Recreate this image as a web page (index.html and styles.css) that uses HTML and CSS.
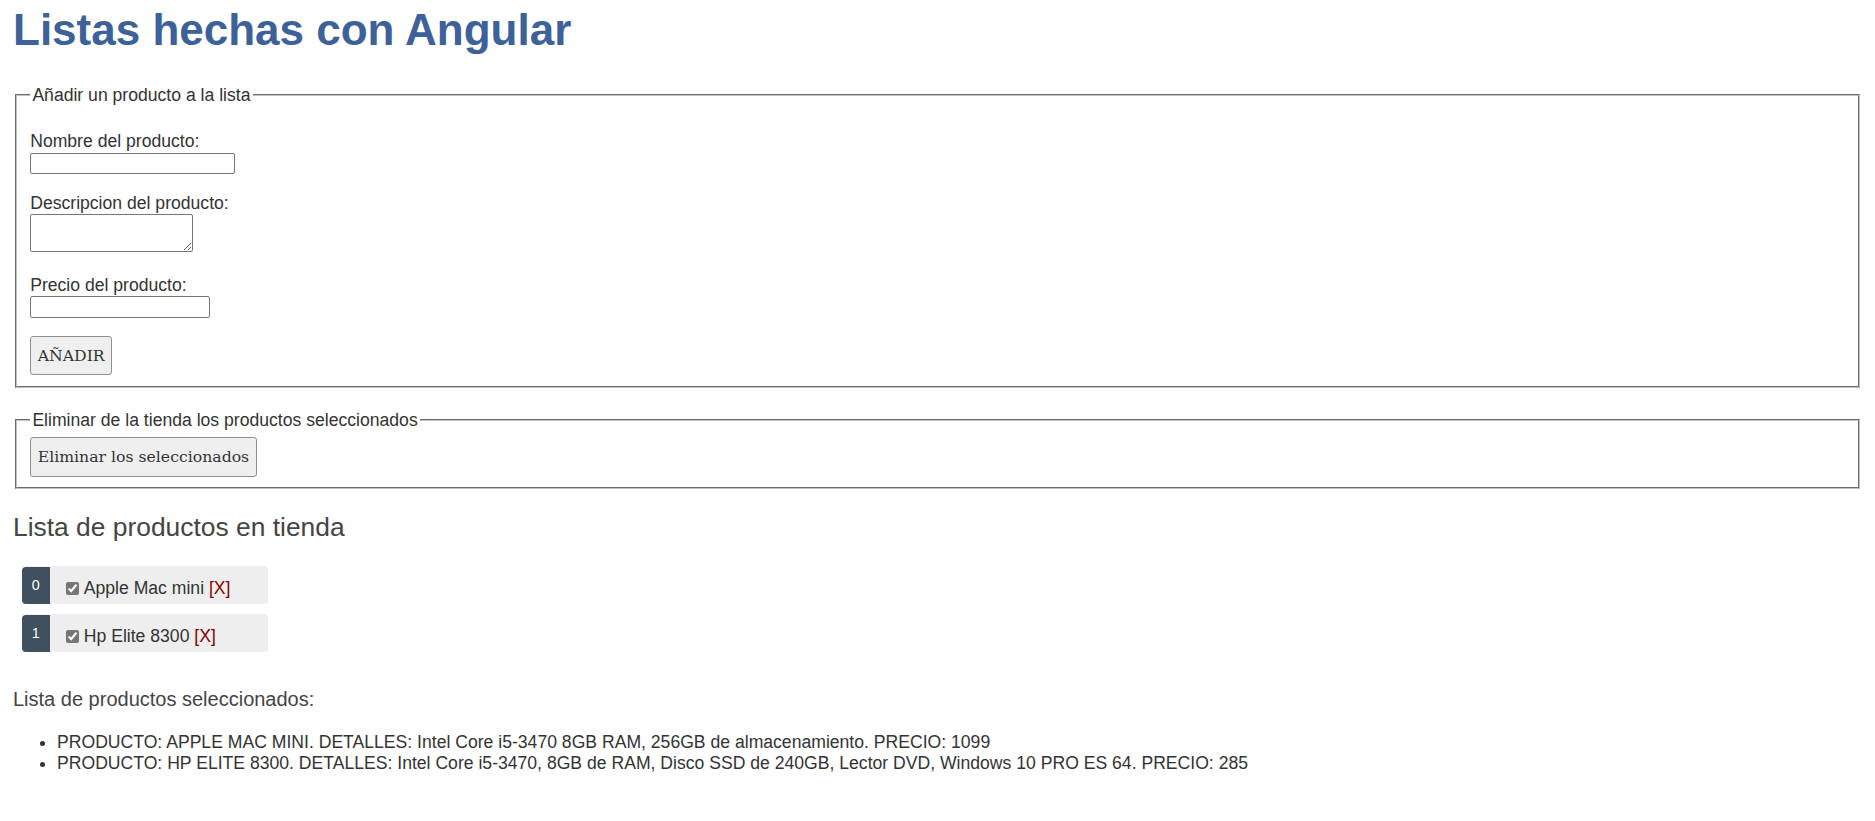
FILE: index.html
```html
<!DOCTYPE html>
<html lang="es">
<head>
<meta charset="utf-8">
<title>Listas hechas con Angular</title>
<link rel="stylesheet" href="styles.css">
</head>
<body>
<h1 class="title">Listas hechas con Angular</h1>

<fieldset class="box box-add">
  <legend class="box-legend">Añadir un producto a la lista</legend>
  <div class="field field-first">
    <label class="field-label" for="nombre">Nombre del producto:</label>
    <input class="field-input input-name" id="nombre" type="text">
  </div>
  <div class="field">
    <label class="field-label" for="desc">Descripcion del producto:</label>
    <textarea class="field-textarea" id="desc"></textarea>
  </div>
  <div class="field field-after-textarea">
    <label class="field-label" for="precio">Precio del producto:</label>
    <input class="field-input input-price" id="precio" type="text">
  </div>
  <button class="btn btn-add" type="button">AÑADIR</button>
</fieldset>

<fieldset class="box box-remove">
  <legend class="box-legend">Eliminar de la tienda los productos seleccionados</legend>
  <button class="btn btn-remove" type="button">Eliminar los seleccionados</button>
</fieldset>

<h2 class="section-title">Lista de productos en tienda</h2>
<ul class="products">
  <li class="product">
    <span class="badge">0</span>
    <label class="product-label"><input class="product-check" type="checkbox" checked>Apple Mac mini</label>
    <span class="product-delete">[X]</span>
  </li>
  <li class="product">
    <span class="badge">1</span>
    <label class="product-label"><input class="product-check" type="checkbox" checked>Hp Elite 8300</label>
    <span class="product-delete">[X]</span>
  </li>
</ul>

<h3 class="selected-title">Lista de productos seleccionados:</h3>
<ul class="selected">
  <li>PRODUCTO: APPLE MAC MINI. DETALLES: Intel Core i5-3470 8GB RAM, 256GB de almacenamiento. PRECIO: 1099</li>
  <li>PRODUCTO: HP ELITE 8300. DETALLES: Intel Core i5-3470, 8GB de RAM, Disco SSD de 240GB, Lector DVD, Windows 10 PRO ES 64. PRECIO: 285</li>
</ul>
</body>
</html>
```

FILE: styles.css
```css
* {
  font-family: "Liberation Sans", Arial, Helvetica, sans-serif;
}

html, body {
  background: #ffffff;
}

body {
  margin: 0 13px;
  color: #333333;
  font-size: 17.6px;
}

.title {
  margin: 5px 0 0;
  font-size: 44px;
  line-height: 50.6px;
  font-weight: bold;
  color: #3d6199;
}

.box {
  margin: 29.4px 2px 0;
  padding: 6px 13.2px 10.5px;
  border: 2px groove #c0c0c0;
  min-width: 0;
}

.box-remove {
  margin-top: 22.3px;
}

.box-legend {
  padding: 0 2.2px;
  font-size: 17.6px;
  line-height: 20.2px;
  color: #333333;
}

.field {
  margin-top: 18.7px;
}

.field-first {
  margin-top: 20px;
}

.field-after-textarea {
  margin-top: 22.3px;
}

.field-label {
  display: block;
  font-size: 17.6px;
  line-height: 20.2px;
  color: #333333;
}

.field-input {
  display: block;
  box-sizing: border-box;
  margin: 1.3px 0 0;
  height: 21.8px;
  padding: 1px 3px;
  border: 1px solid #767676;
  border-radius: 2px;
  background: #ffffff;
  font-size: 14.6px;
}

.input-name {
  width: 205px;
}

.input-price {
  width: 180px;
}

.field-textarea {
  display: block;
  box-sizing: border-box;
  margin: 1px 0 0;
  width: 163px;
  height: 38px;
  padding: 2px;
  border: 1px solid #767676;
  border-radius: 2px;
  background: #ffffff;
  font-size: 14.6px;
}

.btn {
  display: block;
  box-sizing: border-box;
  height: 39.5px;
  padding: 0 6.5px;
  border: 1px solid #8f8f8f;
  border-radius: 3px;
  background: #efefef;
  color: #333333;
  font-family: "DejaVu Serif", "Liberation Serif", serif;
  font-size: 15.7px;
}

.btn-add {
  margin-top: 17.7px;
}

.btn-remove {
  margin-top: 1px;
}

.section-title {
  margin: 23px 0 23.3px;
  font-size: 26.4px;
  line-height: 30.3px;
  font-weight: normal;
  color: #444444;
}

.products {
  list-style: none;
  margin: 0;
  padding: 0;
  width: 264px;
}

.product {
  display: flex;
  align-items: stretch;
  box-sizing: border-box;
  height: 38.5px;
  margin: 0 8.8px 9.5px;
  background: #eeeeee;
  border-radius: 4px;
  font-size: 17.6px;
  color: #333333;
}

.badge {
  box-sizing: border-box;
  width: 28px;
  margin: 1px 11.4px 0 0;
  padding-top: 11.5px;
  background: #405061;
  color: #ffffff;
  border-radius: 4px 0 0 4px;
  font-size: 14.3px;
  line-height: 14.3px;
  text-align: center;
}

.product-label {
  display: flex;
  align-items: center;
  padding-top: 7px;
}

.product-check {
  width: 13px;
  height: 13px;
  margin: 0 4.6px 0 5px;
  accent-color: #767676;
}

.product-delete {
  display: flex;
  align-items: center;
  padding: 7px 0 0 4.9px;
  color: #8b0000;
}

.selected-title {
  margin: 35.9px 0 20.6px;
  font-size: 20px;
  line-height: 23px;
  font-weight: normal;
  color: #444444;
}

.selected {
  margin: 0;
  padding-left: 44px;
  font-size: 17.6px;
  line-height: 21px;
  color: #333333;
}
```
